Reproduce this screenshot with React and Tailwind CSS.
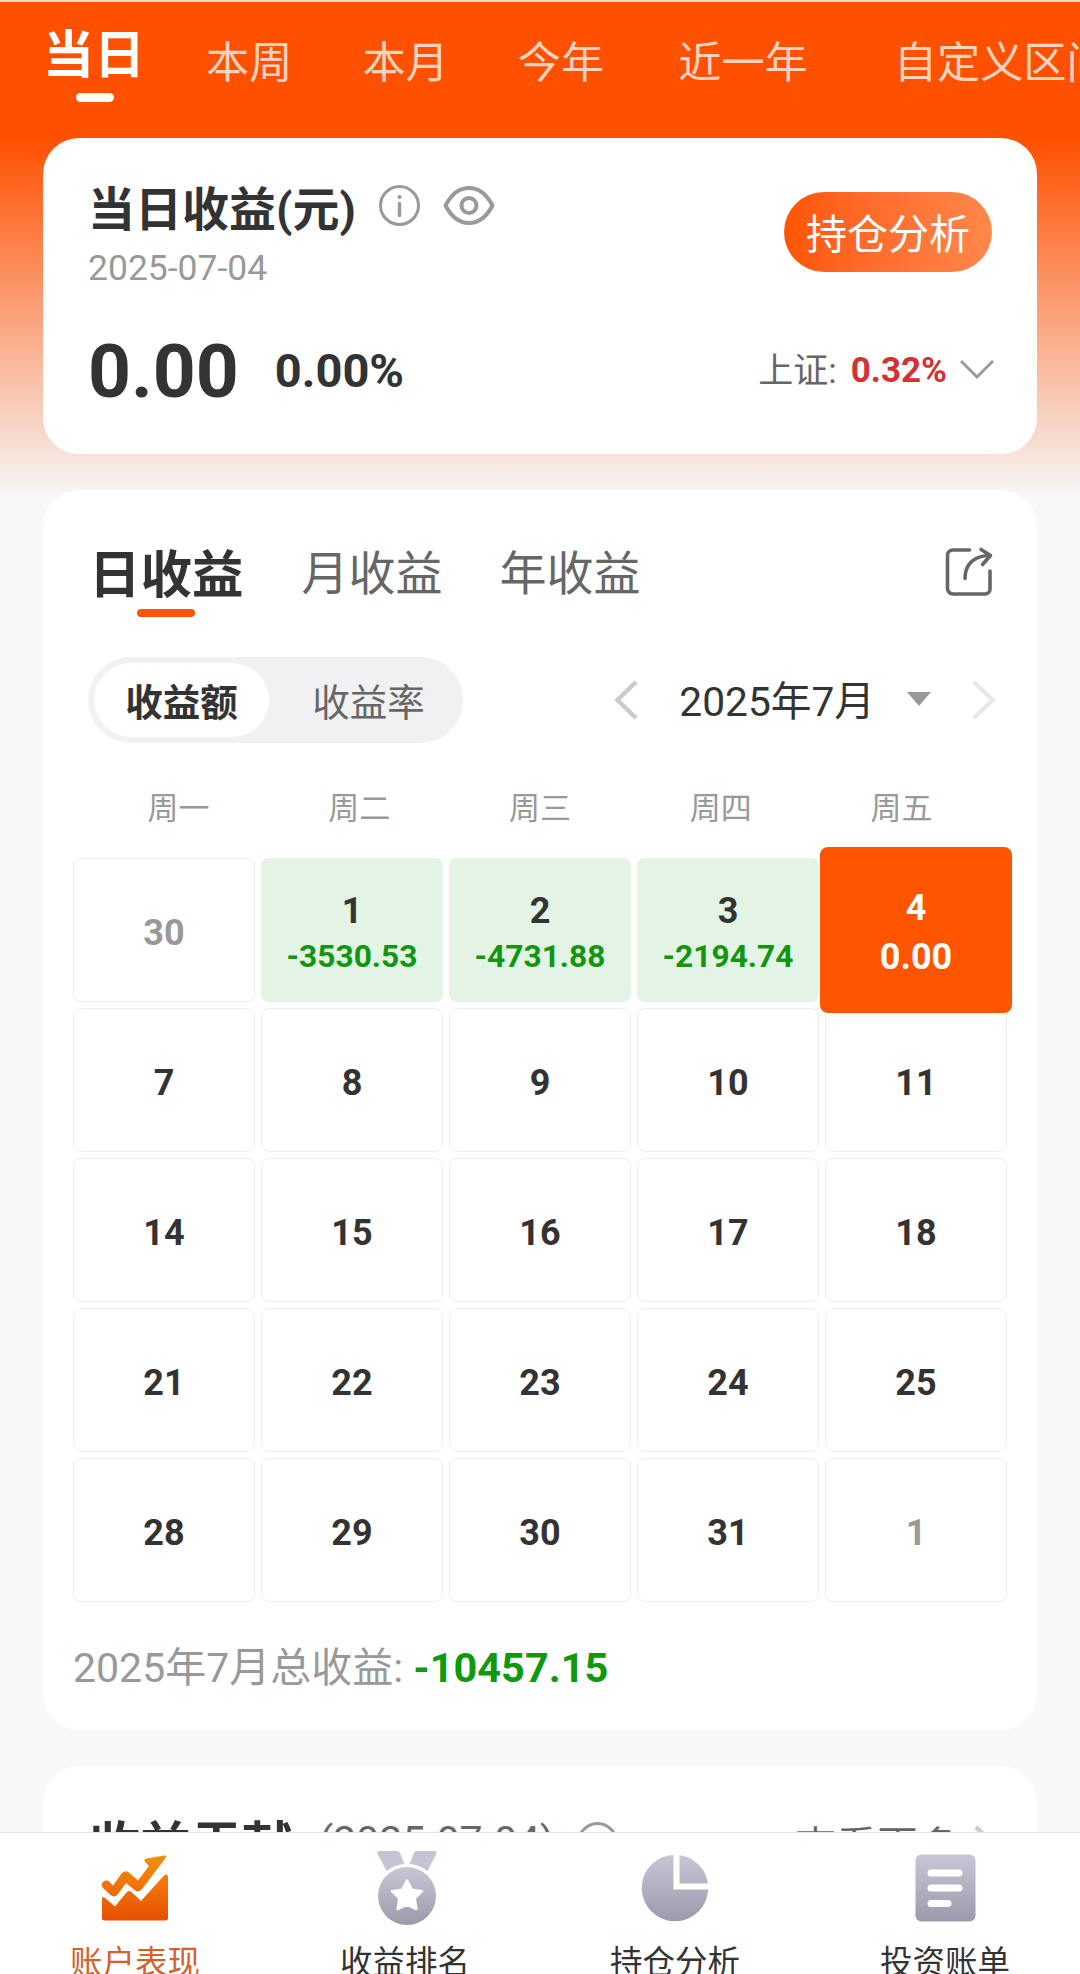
// src/EarningsPage.jsx
import React, { useState } from 'react';

const PERIODS = [
    { label: '本周', className: 'ml-[61px]' },
    { label: '本月', className: 'ml-[70px]' },
    { label: '今年', className: 'ml-[69px]' },
    { label: '近一年', className: 'ml-[74px]' },
    { label: '自定义区间', className: 'ml-[86px]' },
];

const WEEKDAYS = ['周一', '周二', '周三', '周四', '周五'];

const DAYS = [
    { id: 'p30', day: 30, outside: true },
    { id: 'd1', day: 1, profit: '-3530.53' },
    { id: 'd2', day: 2, profit: '-4731.88' },
    { id: 'd3', day: 3, profit: '-2194.74' },
    { id: 'd4', day: 4, profit: '0.00' },
    ...[7, 8, 9, 10, 11, 14, 15, 16, 17, 18, 21, 22, 23, 24, 25, 28, 29, 30, 31].map((day) => ({ id: `d${day}`, day })),
    { id: 'n1', day: 1, outside: true },
];

const InfoIcon = ({ className }) => (
    <svg className={className} width="41" height="41" viewBox="0 0 41 41" fill="none" stroke="#999" strokeWidth="3">
        <circle cx="20.5" cy="20.5" r="19" />
        <path d="M20.5 18.5v12" strokeWidth="3.4" strokeLinecap="round" />
        <circle cx="20.5" cy="12" r="2" fill="#999" stroke="none" />
    </svg>
);

const EyeIcon = ({ className }) => (
    <svg className={className} width="52" height="41" viewBox="0 0 52 41" fill="none" stroke="#999" strokeWidth="4">
        <path d="M2.5 20.5C8 10 16 3 26 3s18 7 23.5 17.5C44 31 36 38 26 38S8 31 2.5 20.5Z" strokeLinejoin="round" />
        <circle cx="26" cy="20.5" r="7.5" />
    </svg>
);

const ShareIcon = () => (
    <svg width="48" height="49" viewBox="0 0 48 49" fill="none" stroke="#666" strokeWidth="3.6" strokeLinecap="round">
        <path d="M24.5 3H8a5.5 5.5 0 0 0-5.5 5.5v33A5.5 5.5 0 0 0 8 47h32a5 5 0 0 0 5-5V24" />
        <path d="M20 31.5C20 17 29 8.5 45 8.5" />
        <path d="M36 2.5l9.500 6-8 9" strokeLinejoin="round" />
    </svg>
);

const ArrowIcon = ({ right, color, className }) => (
    <svg className={className} width="24" height="40" viewBox="0 0 24 40" fill="none" stroke={color} strokeWidth="4.5">
        <path d={right ? 'M2 2l18.5 18L2 38' : 'M22 2L3.5 20 22 38'} />
    </svg>
);

const TrendIcon = () => (
    <svg width="68" height="66" viewBox="0 0 68 66">
        <defs>
            <linearGradient id="trend" x1="0" y1="0" x2="0" y2="66" gradientUnits="userSpaceOnUse">
                <stop stopColor="#f0930f" />
                <stop offset=".35" stopColor="#f27a08" />
                <stop offset="1" stopColor="#e84f02" />
            </linearGradient>
        </defs>
        <g fill="url(#trend)">
            <path d="M45 3.5L63.5.5q2.5-.2 1.500 2L41 34q-3.500 4-7.500 1L25 28l-8.500 11.500q-3 3.500-7 .5L2 33q-3-4 .5-6.500 3-2 6 .5l3.500 3.500 8.500-12q4-4 8-.5l8.500 7.500L48 11l-4-4q-1.500-2.500 1-3.500Z" />
            <path d="M1 44q0-3.500 3-1l10 8.500L25 38q2.500-3.500 5.500-1l9.500 9L62.500 21q4.500-3.500 4.500 1.500V63q0 2.500-2.500 2.500H3.500Q1 65.500 1 63Z" />
        </g>
    </svg>
);

// Shared gray-violet fill of the inactive icons
const GrayFill = ({ id }) => (
    <defs>
        <linearGradient id={id} x1="0" y1="0" x2="0" y2="1">
            <stop stopColor="#c8c7d8" />
            <stop offset="1" stopColor="#9b9aab" />
        </linearGradient>
    </defs>
);

const MedalIcon = () => (
    <svg className="ml-[3px]" width="60" height="74" viewBox="0 0 60 74">
        <GrayFill id="medal" />
        <path d="M2.5 0H20q2 0 3 2l4.500 11Q17 14 9.500 20L.7 3Q0 0 2.500 0ZM57.500 0H40q-2 0-3 2l-4.500 11Q43 14 50.500 20L59.300 3Q60 0 57.500 0Z" fill="#c5c4d5" />
        <circle cx="30" cy="45" r="29" fill="url(#medal)" />
        <path d="M30 29.500l4.800 9.200 10.200 1.500-7.300 7.200 1.700 10.600-9.400-4.500L20.600 58l1.700-10.600-7.300-7.200 10.200-1.500Z" fill="#fff" stroke="#fff" strokeWidth="2.5" strokeLinejoin="round" />
    </svg>
);

const PieIcon = () => (
    <svg width="68" height="68" viewBox="0 0 68 68">
        <GrayFill id="pie" />
        <circle cx="34" cy="34" r="33.3" fill="url(#pie)" />
        <path d="M35.5 0v32.500H68" fill="none" stroke="#fff" strokeWidth="6" />
    </svg>
);

const BillIcon = () => (
    <svg width="61" height="68" viewBox="0 0 61 68">
        <GrayFill id="bill" />
        <rect x=".5" y=".5" width="60" height="67" rx="6" fill="url(#bill)" />
        <path d="M16 19h28M16 34h28M16 49.500h17" stroke="#fff" strokeWidth="7" strokeLinecap="round" />
    </svg>
);

const NAV_ITEMS = [
    { label: '账户表现', Icon: TrendIcon },
    { label: '收益排名', Icon: MedalIcon },
    { label: '持仓分析', Icon: PieIcon },
    { label: '投资账单', Icon: BillIcon },
];

const DayCell = ({ item, selected, onSelect }) => {
    const { day, profit, outside } = item;

    let box = 'border border-[#eee] bg-white';
    if (selected) {
        box = 'relative z-10 -mx-[5px] -my-[11px] bg-[#ff5500] pt-[5px] text-white';
    } else if (profit) {
        box = 'bg-[#e4f4e4] pt-[7px]';
    }

    return (
        <button
            className={`flex flex-col items-center justify-center rounded-lg font-bold ${outside ? 'text-[#999]' : ''} ${box}`}
            onClick={() => onSelect(item.id)}
        >
            <span className={`text-[36px] ${selected ? 'leading-[49px]' : profit ? 'leading-[46px]' : 'pt-[5px] leading-[48px]'}`}>{day}</span>
            {profit && (
                <span className={selected ? 'text-[36px] leading-[49px]' : 'text-[31.7px] leading-[46px] text-[#129612]'}>{profit}</span>
            )}
        </button>
    );
};

const EarningsPage = () => {
    const [selectedDay, setSelectedDay] = useState('d4');

    return (
        <div className="flex h-[1974px] w-[1080px] flex-col overflow-hidden bg-[#f6f8fa] font-[Roboto,'Noto_Sans_CJK_SC',sans-serif] text-[#333]">
            <main className="h-[1832px] overflow-hidden border-t-2 border-[#fbdcc8] bg-[linear-gradient(#ff5000_136px,#f6f8fa_498px)]">
                <header className="flex h-[136px] items-start overflow-hidden pl-[43px] whitespace-nowrap">
                    <div className="flex shrink-0 flex-col items-center pt-[29px] text-white">
                        <span className="text-[51px] leading-[50px] font-bold">当日</span>
                        <span className="mt-[12px] ml-px h-[9px] w-[38px] rounded-full bg-white" />
                    </div>
                    {PERIODS.map(({ label, className }) => (
                        <span key={label} className={`shrink-0 pt-[40px] text-[43.2px] leading-[44px] text-[#ffd3bd] ${className}`}>{label}</span>
                    ))}
                </header>

                {/* Daily summary */}
                <section className="mx-[43px] h-[316px] rounded-[36px] bg-white pt-[44px] pr-[47px] pl-[45px]">
                    <div className="flex items-start justify-between">
                        <div>
                            <div className="flex h-[56px] items-center">
                                <h1 className="text-[47px] leading-[56px] font-bold">当日收益(元)</h1>
                                <InfoIcon className="mb-[9px] ml-[23px]" />
                                <EyeIcon className="mb-[9px] ml-[23px]" />
                            </div>
                            <p className="mt-[10px] text-[35.5px] leading-[40px] text-[#999]">2025-07-04</p>
                        </div>
                        <button className="mt-[10px] mr-[-2px] h-[80px] w-[208px] rounded-full bg-linear-to-r from-[#ff5500] to-[#ff874a] pt-[3px] text-[41px] leading-[80px] text-white">
                            持仓分析
                        </button>
                    </div>
                    <div className="mt-[43px] flex h-[80px] items-center">
                        <span className="text-[75px] leading-[80px] font-bold">0.00</span>
                        <span className="ml-[36px] text-[47px] leading-[80px] font-bold">0.00%</span>
                        <div className="mr-[-4px] ml-auto flex items-center text-[35px]">
                            <span className="pt-[2px] text-[#666]">上证:</span>
                            <span className="ml-[14px] font-bold text-[#d43232]">0.32%</span>
                            <svg className="mb-[2px] ml-[13px]" width="34" height="20" viewBox="0 0 34 20" fill="none" stroke="#999" strokeWidth="2.8">
                                <path d="M1 1l16 16L33 1" />
                            </svg>
                        </div>
                    </div>
                </section>

                {/* Earnings calendar */}
                <section className="mx-[43px] mt-[36px] h-[1240px] rounded-[36px] bg-white px-[30px] pt-[59px]">
                    <div className="flex h-[68px] items-start pl-[16px]">
                        <div className="flex flex-col items-center pt-px">
                            <span className="text-[51.5px] leading-[52px] font-bold">日收益</span>
                            <span className="mt-[7px] h-[8px] w-[58px] rounded-full bg-[#fa550f]" />
                        </div>
                        <span className="-mt-px ml-[58px] text-[47px] leading-[52px] text-[#666]">月收益</span>
                        <span className="-mt-px ml-[57px] text-[47px] leading-[52px] text-[#666]">年收益</span>
                        <span className="-mt-[2px] mr-[14px] ml-auto">
                            <ShareIcon />
                        </span>
                    </div>

                    <div className="mt-[40px] flex h-[86px] items-center justify-between pr-[11px] pl-[15px]">
                        <div className="flex h-[86px] w-[375px] items-center rounded-full bg-[#f1f1f4] p-[6px] text-[37.5px]">
                            <span className="h-[74px] w-[175px] rounded-full bg-white text-center leading-[80px] font-bold">收益额</span>
                            <span className="ml-[12px] h-[74px] w-[175px] text-center leading-[80px] text-[#666]">收益率</span>
                        </div>
                        <div className="flex items-center">
                            <ArrowIcon color="#ccc" />
                            <span className="ml-[41px] pt-[4px] text-[40.7px] leading-[86px]">2025年7月</span>
                            <svg className="mb-[2px] ml-[32px]" width="24" height="14" viewBox="0 0 24 14">
                                <path d="M0 0h24L12 14Z" fill="#999" />
                            </svg>
                            <ArrowIcon right color="#e8e8e8" className="ml-[41px]" />
                        </div>
                    </div>

                    <div className="mt-[50px] grid grid-cols-5 px-[15px] text-center text-[31px] leading-[32px] text-[#999]">
                        {WEEKDAYS.map((name) => (
                            <span key={name}>{name}</span>
                        ))}
                    </div>

                    <div className="mt-[33px] grid auto-rows-[144px] grid-cols-5 gap-[6px]">
                        {DAYS.map((item) => (
                            <DayCell key={item.id} item={item} selected={item.id === selectedDay} onSelect={setSelectedDay} />
                        ))}
                    </div>

                    <p className="mt-[42px] text-[41px] leading-[48px] text-[#999]">
                        2025年7月总收益: <span className="text-[41.5px] font-bold text-[#0f990f]">-10457.15</span>
                    </p>
                </section>

                {/* Earnings contribution */}
                <section className="mx-[43px] mt-[36px] flex h-[300px] items-start rounded-[36px] bg-white pt-[51px] pr-[39px] pl-[46px]">
                    <h2 className="text-[51px] leading-[60px] font-bold">收益贡献</h2>
                    <span className="-mt-[6px] ml-[26px] text-[41px] leading-[60px] text-[#666]">(2025-07-04)</span>
                    <InfoIcon className="mt-[5px] ml-[23px]" />
                    <span className="ml-auto text-[41px] leading-[60px] text-[#666]">查看更多</span>
                    <ArrowIcon right color="#ccc" className="mt-[8px] ml-[15px]" />
                </section>
            </main>

            <nav className="grid h-[142px] grid-cols-4 border-t border-[#e6e6e6] bg-white">
                {NAV_ITEMS.map(({ label, Icon }, index) => (
                    <div key={label} className="flex flex-col items-center pt-[18px]">
                        <div className="flex h-[74px] items-center justify-center">
                            <Icon />
                        </div>
                        <span className={`mt-[18px] shrink-0 text-[32.5px] leading-[40px] ${index === 0 ? 'text-[#d4622a]' : ''}`}>{label}</span>
                    </div>
                ))}
            </nav>
        </div>
    );
};

export default EarningsPage;
